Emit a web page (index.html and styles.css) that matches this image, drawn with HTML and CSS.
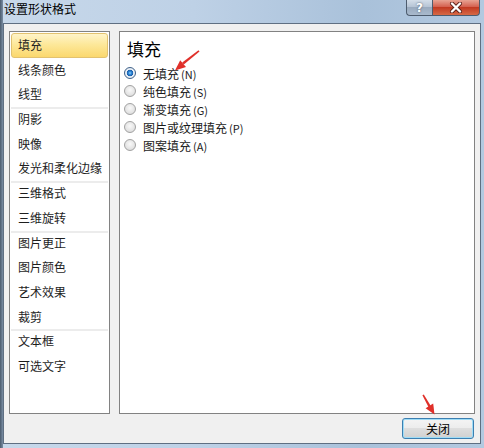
FILE: index.html
```html
<!DOCTYPE html>
<html lang="zh-CN">
<head>
<meta charset="utf-8">
<title>设置形状格式</title>
<link rel="stylesheet" href="styles.css">
</head>
<body>
<div class="window">
  <div class="titlebar">
    <span class="title">设置形状格式</span>
    <div class="caption">
      <div class="cbtn help">?</div>
      <div class="cbtn close">
        <svg width="14" height="11" viewBox="0 0 14 11">
          <path d="M3 1.5 L11 9.5 M11 1.5 L3 9.5" stroke="#5a2018" stroke-width="4" stroke-linecap="round"/>
          <path d="M3 1.5 L11 9.5 M11 1.5 L3 9.5" stroke="#ffffff" stroke-width="2.4" stroke-linecap="round"/>
        </svg>
      </div>
    </div>
  </div>
  <div class="client">
    <div class="main">
      <ul class="nav">
        <li class="active">填充</li>
        <li>线条颜色</li>
        <li>线型</li>
        <li class="sep">阴影</li>
        <li>映像</li>
        <li>发光和柔化边缘</li>
        <li class="sep">三维格式</li>
        <li>三维旋转</li>
        <li class="sep">图片更正</li>
        <li>图片颜色</li>
        <li>艺术效果</li>
        <li>裁剪</li>
        <li class="sep">文本框</li>
        <li>可选文字</li>
      </ul>
      <div class="panel">
        <div class="heading">填充</div>
        <div class="options">
          <div class="opt"><span class="radio checked"></span><span>无填充<span class="key">(N)</span></span></div>
          <div class="opt"><span class="radio"></span><span>纯色填充<span class="key">(S)</span></span></div>
          <div class="opt"><span class="radio"></span><span>渐变填充<span class="key">(G)</span></span></div>
          <div class="opt"><span class="radio"></span><span>图片或纹理填充<span class="key">(P)</span></span></div>
          <div class="opt"><span class="radio"></span><span>图案填充<span class="key">(A)</span></span></div>
        </div>
      </div>
    </div>
    <div class="footer">
      <button class="btn">关闭</button>
    </div>
  </div>
  <svg class="arrows" width="484" height="448" viewBox="0 0 484 448">
    <polygon points="199.5,51.5 198.5,50.3 182.2,62.5 183.8,64.6" fill="#e0302a"/>
    <polygon points="175,70.5 186,67 180.2,60.2" fill="#e0302a"/>
    <polygon points="422.4,395.3 423.8,394.6 430.8,406 428.6,407.2" fill="#e0302a"/>
    <polygon points="434.5,414.5 433.2,403.6 425.6,408.3" fill="#e0302a"/>
  </svg>
</div>
</body>
</html>
```

FILE: styles.css
```css
html, body {
  margin: 0;
  padding: 0;
}

body {
  width: 484px;
  height: 448px;
  overflow: hidden;
  font-family: "Noto Sans CJK SC", "Noto Sans", sans-serif;
  font-size: 12px;
  color: #1a1a1a;
}

.window {
  position: relative;
  width: 484px;
  height: 448px;
  display: flex;
  flex-direction: column;
  background:
    linear-gradient(90deg, #4b5b6d 0, #7a8ea4 3px, rgba(0,0,0,0) 3px),
    linear-gradient(90deg, #c7d8ea 0%, #bed1e6 40%, #a9c1da 75%, #b3c9e0 100%);
}

.titlebar {
  height: 23px;
  flex: none;
  display: flex;
  justify-content: space-between;
  align-items: flex-start;
  padding-left: 4px;
}

.title {
  font-size: 12px;
  line-height: 18px;
  color: #000;
}

.caption {
  display: flex;
  margin-right: 4px;
}

.cbtn {
  height: 16px;
  box-sizing: border-box;
  border: 1px solid #4d5c6e;
  border-top: none;
  display: flex;
  align-items: center;
  justify-content: center;
}

.help {
  width: 26px;
  border-right: none;
  border-radius: 0 0 0 4px;
  background: linear-gradient(#d4dee9, #b3c2d3 50%, #9aabbf 50%, #a9bacd);
  color: #fff;
  font-family: "DejaVu Sans", sans-serif;
  font-weight: bold;
  font-size: 12px;
  line-height: 14px;
  text-shadow: 0 0 2px #3d4b5c;
}

.close {
  width: 48px;
  border-radius: 0 0 4px 0;
  background: linear-gradient(#e8a393, #d25a48 50%, #c23a22 50%, #d66a46);
}

.client {
  flex: 1;
  min-height: 0;
  margin: 0 3px 4px 3px;
  border: 1px solid #5f6f82;
  background: #f0f0f0;
  padding: 7px 5px 4px 5px;
  display: flex;
  flex-direction: column;
}

.main {
  flex: 1;
  min-height: 0;
  display: flex;
  gap: 9px;
}

.nav {
  width: 101px;
  flex: none;
  box-sizing: border-box;
  border: 1px solid #828282;
  background: #fff;
  padding: 1px;
  margin: 0;
  list-style: none;
}

.nav li {
  height: 24.7px;
  line-height: 24.7px;
  padding-left: 7px;
  box-sizing: border-box;
  white-space: nowrap;
  color: #1e1e1e;
}

.nav li.sep {
  background: linear-gradient(#ececec, #ececec) top left / 100% 2px no-repeat;
}

.nav li.active {
  border: 1px solid #e2c270;
  border-radius: 3px;
  padding-left: 6px;
  line-height: 22.7px;
  background: linear-gradient(#fff4c9, #fde89a 45%, #fbd86e);
}

.panel {
  flex: 1;
  box-sizing: border-box;
  border: 1px solid #828282;
  background: #fff;
  padding: 7px 4px;
}

.heading {
  font-size: 17px;
  line-height: 20px;
  margin-left: 3px;
  color: #000;
}

.options {
  margin-top: 5px;
}

.opt {
  display: flex;
  align-items: center;
  height: 18px;
  gap: 7px;
  color: #1a1a1a;
}

.key {
  margin-left: 2px;
  font-size: 11px;
}

.radio {
  width: 12px;
  height: 12px;
  flex: none;
  border-radius: 50%;
  box-sizing: border-box;
  border: 1px solid #a2a2a2;
  background: radial-gradient(circle at 50% 40%, #f9f9f9 0, #e4e4e4 60%, #d2d2d2 100%);
}

.radio.checked {
  border-color: #3f6189;
  background: radial-gradient(circle at 50% 50%, #8fd0fb 0, #2d86d6 1.6px, #1a5ca8 3px, #eef4fa 3.6px, #d8dee6 100%);
}

.footer {
  flex: none;
  display: flex;
  justify-content: flex-end;
  padding-top: 4px;
}

.btn {
  width: 72px;
  height: 21px;
  margin: 0 1px 0 0;
  padding: 0;
  box-sizing: border-box;
  border: 1px solid #3c7fb1;
  border-radius: 3px;
  box-shadow: inset 0 0 0 1px #9fdcf6;
  background: linear-gradient(#f4f4f4, #ececec 50%, #dedede 50%, #d0d0d0);
  font-family: "Noto Sans CJK SC", sans-serif;
  font-size: 12px;
  line-height: 18px;
  color: #000;
}

.arrows {
  position: absolute;
  left: 0;
  top: 0;
  pointer-events: none;
}
```
